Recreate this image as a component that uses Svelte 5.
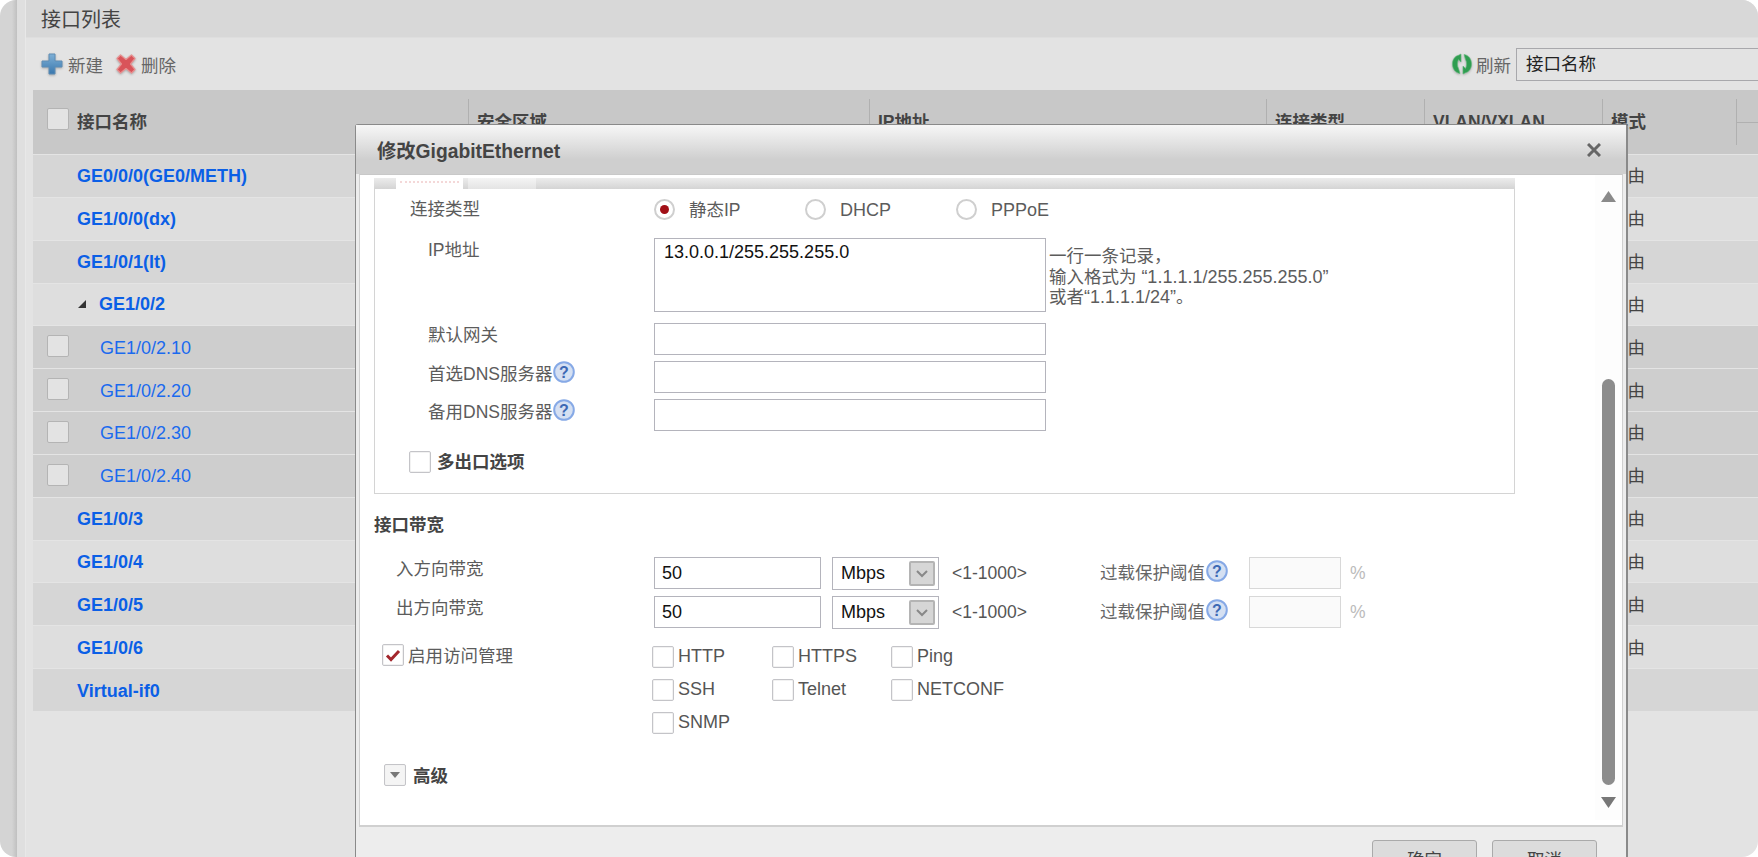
<script>
  const rows = [
    { name: "GE0/0/0(GE0/METH)", tone: "a", mode: "路由" },
    { name: "GE1/0/0(dx)", tone: "b", mode: "路由" },
    { name: "GE1/0/1(lt)", tone: "a", mode: "路由" },
    { name: "GE1/0/2", tone: "b", mode: "路由", open: true },
    { name: "GE1/0/2.10", tone: "c", mode: "路由", child: true },
    { name: "GE1/0/2.20", tone: "c", mode: "路由", child: true },
    { name: "GE1/0/2.30", tone: "c", mode: "路由", child: true },
    { name: "GE1/0/2.40", tone: "c", mode: "路由", child: true },
    { name: "GE1/0/3", tone: "a", mode: "路由" },
    { name: "GE1/0/4", tone: "b", mode: "路由" },
    { name: "GE1/0/5", tone: "a", mode: "路由" },
    { name: "GE1/0/6", tone: "b", mode: "路由" },
    { name: "Virtual-if0", tone: "a", mode: "" }
  ];
  const heads = [
    { label: "安全区域", w: 401 },
    { label: "IP地址", w: 397 },
    { label: "连接类型", w: 158 },
    { label: "VLAN/VXLAN", w: 178 },
    { label: "模式", w: 134 }
  ];
  const services = ["HTTP", "HTTPS", "Ping", "SSH", "Telnet", "NETCONF", "SNMP"];
  const bandwidth = ["入方向带宽", "出方向带宽"];
</script>

{#snippet hint()}
  <svg class="hint" width="22" height="22" viewBox="0 0 22 22">
    <circle cx="11" cy="11" r="9.800" fill="#d5e0f2" stroke="#86a9e6" stroke-width="2" />
    <text x="11" y="16.500" text-anchor="middle" class="hint-q">?</text>
  </svg>
{/snippet}

<div class="shell">
  <div class="rail"></div>
  <div class="rail-inner"></div>
  <div class="panel">
    <div class="panel-title">接口列表</div>
    <div class="toolbar">
      <svg class="soft" width="22" height="22" viewBox="0 0 22 22">
        <defs>
          <linearGradient id="plusfill" x1="0" y1="0" x2="0" y2="1">
            <stop offset="0" stop-color="#7fb0d6" />
            <stop offset="1" stop-color="#3a78ae" />
          </linearGradient>
        </defs>
        <path d="M8 1h6v7h7v6h-7v7h-6v-7h-7v-6h7z" fill="url(#plusfill)" stroke="#5f8db5" stroke-width="1" stroke-linejoin="round" />
      </svg>
      <span class="tool-label plus-label">新建</span>
      <svg class="soft del" width="20" height="20" viewBox="0 0 20 20">
        <path d="M4.500 1 10 5.500 15.500 1 19 4.500 14.500 10 19 15.500 15.500 19 10 14.500 4.500 19 1 15.500 5.500 10 1 4.500z" fill="#d9545a" stroke="#e78f8f" stroke-width="1.200" stroke-linejoin="round" />
      </svg>
      <span class="tool-label">删除</span>
      <span class="spacer"></span>
      <svg class="soft" width="20" height="22" viewBox="0 0 20 22">
        <path d="M9 1v8L6.500 6.500C5 9 5 13 6.500 15.500L8 20.500C3 19.800.5 15.500.5 11 .5 6.500 3 3 6.500 2.300z" fill="#2f9d50" stroke="#5fbb7a" stroke-width=".6" stroke-linejoin="round" />
        <path d="M11 21v-8l2.500 2.500c1.500-2.500 1.500-6.500 0-9L12 1.500c5 .7 7.500 5 7.500 9.500 0 4.500-2.500 8-6 8.700z" fill="#2f9d50" stroke="#5fbb7a" stroke-width=".6" stroke-linejoin="round" />
      </svg>
      <span class="tool-label refresh-label">刷新</span>
      <div class="searchbox">接口名称</div>
    </div>

    <div class="grid">
      <div class="head">
        <div class="head-name">
          <span class="cb on-grey"></span>
          <span>接口名称</span>
        </div>
        {#each heads as h}
          <div class="th" style="width:{h.w}px">{h.label}</div>
        {/each}
        <div class="th th-last"><i></i></div>
      </div>
      {#each rows as r}
        <div class="row {r.tone}">
          <div class="name">
            {#if r.child}
              <span class="cb on-grey"></span>
              <a class="child-link" href="#top">{r.name}</a>
            {:else if r.open}
              <svg class="tree" width="10" height="10" viewBox="0 0 10 10"><path d="M1 9 9 1v8z" fill="#333" /></svg>
              <a class="link open" href="#top">{r.name}</a>
            {:else}
              <a class="link top" href="#top">{r.name}</a>
            {/if}
          </div>
          <div class="mode">{r.mode}</div>
        </div>
      {/each}
    </div>
  </div>

  <div class="dialog">
    <div class="dlg-title">
      <span>修改GigabitEthernet</span>
      <svg width="14" height="14" viewBox="0 0 14 14">
        <path d="M1 1 13 13M13 1 1 13" stroke="#666" stroke-width="3" />
      </svg>
    </div>
    <div class="dlg-body">
      <div class="content">
        <div class="tabstrip">
          <span class="tab-a"></span>
          <span class="tab-on"><i></i></span>
          <span class="tab-b"></span>
        </div>
        <div class="box">
          <div class="f conn">
            <span class="lab l1">连接类型</span>
            <div class="radios">
              <span class="radio checked"></span><span class="rt w1">静态IP</span>
              <span class="radio"></span><span class="rt w2 en">DHCP</span>
              <span class="radio"></span><span class="rt en">PPPoE</span>
            </div>
          </div>
          <div class="f ip">
            <span class="lab l2 ip-lab">IP地址</span>
            <textarea class="area">13.0.0.1/255.255.255.0</textarea>
            <div class="note">一行一条记录，<br />输入格式为 <span class="en">“1.1.1.1/255.255.255.0”</span><br />或者<span class="en">“1.1.1.1/24”</span>。</div>
          </div>
          <div class="f gw">
            <span class="lab l2">默认网关</span>
            <input class="txt" />
          </div>
          <div class="f dns">
            <span class="lab l2">首选DNS服务器{@render hint()}</span>
            <input class="txt" />
          </div>
          <div class="f dns">
            <span class="lab l2">备用DNS服务器{@render hint()}</span>
            <input class="txt" />
          </div>
          <div class="multi">
            <span class="cb"></span>
            <strong>多出口选项</strong>
          </div>
        </div>

        <h4>接口带宽</h4>
        {#each bandwidth as b, i}
          <div class="bw" class:second={i === 1}>
            <span class="bw-lab">{b}</span>
            <input class="num" value="50" />
            <div class="select">
              <span>Mbps</span>
              <span class="drop">
                <svg width="14" height="9" viewBox="0 0 14 9"><path d="M2 2 7 7l5-5" fill="none" stroke="#888" stroke-width="2" /></svg>
              </span>
            </div>
            <span class="range">&lt;1-1000&gt;</span>
            <span class="over">过载保护阈值{@render hint()}</span>
            <input class="off" disabled />
            <span class="pct">%</span>
          </div>
        {/each}

        <div class="access">
          <div class="access-main">
            <span class="cb">
              <svg width="18" height="16" viewBox="0 0 18 16"><path d="M3 8.500 7 12.500 15 4" fill="none" stroke="#a3262c" stroke-width="3" /></svg>
            </span>
            <span>启用访问管理</span>
          </div>
          <div class="services">
            {#each services as s}
              <div class="svc"><span class="cb"></span><span>{s}</span></div>
            {/each}
          </div>
        </div>

        <div class="adv">
          <span class="cb adv-box">
            <svg width="12" height="8" viewBox="0 0 12 8"><path d="M1 1h10L6 7z" fill="#777" /></svg>
          </span>
          <strong>高级</strong>
        </div>
      </div>

      <div class="scroll">
        <svg class="up" width="15" height="11" viewBox="0 0 15 11"><path d="M7.500 0 15 11H0z" fill="#8a8a8a" /></svg>
        <div class="thumb"></div>
        <svg class="down" width="15" height="11" viewBox="0 0 15 11"><path d="M0 0h15L7.500 11z" fill="#777" /></svg>
      </div>
    </div>
    <div class="dlg-foot">
      <button>确定</button>
      <button>取消</button>
    </div>
  </div>
</div>

<style>
  :global(body) {
    margin: 0;
    background: #fff;
    overflow: hidden;
  }
  .shell {
    position: relative;
    display: flex;
    width: 1758px;
    height: 857px;
    overflow: hidden;
    border-radius: 16px;
    font: 17.5px "Liberation Sans", "Noto Sans CJK SC", sans-serif;
    color: #555;
  }
  .en { font-size: 18px; }
  .rail {
    width: 17px;
    background: linear-gradient(to right, #d4d4d4 70%, #c0c0c0);
  }
  .rail-inner {
    width: 9px;
    background: #dfdfdf;
    border-right: 1px solid #e8e8e8;
    box-sizing: border-box;
  }
  .panel {
    flex: 1;
    min-width: 0;
    background: #e3e3e3;
  }
  .panel-title {
    height: 38px;
    box-sizing: border-box;
    padding: 3px 0 0 15px;
    line-height: 34px;
    font-size: 20px;
    color: #444;
    background: #d8d8d8;
    border-bottom: 1px solid #dedede;
  }
  .toolbar {
    display: flex;
    align-items: center;
    height: 52px;
    padding-left: 15px;
    color: #666;
  }
  .soft { filter: drop-shadow(0 1px 1px rgba(0, 0, 0, 0.25)); flex: none; }
  .tool-label { margin-left: 5px; }
  .plus-label { margin-right: 13px; }
  .spacer { flex: 1; }
  .refresh-label { margin-left: 4px; margin-right: 5px; }
  .searchbox {
    width: 232px;
    height: 31px;
    line-height: 31px;
    padding-left: 9px;
    border: 1px solid #a8a8ac;
    border-right: none;
    color: #222;
  }
  .grid { margin-left: 7px; }
  .head {
    display: flex;
    height: 64px;
    background: #c8c8c8;
    color: #444;
    font-weight: bold;
  }
  .head-name {
    display: flex;
    align-items: center;
    gap: 8px;
    width: 435px;
    box-sizing: border-box;
    padding: 0 0 4px 14px;
  }
  .head-name .cb { margin-bottom: 3px; }
  .th {
    box-sizing: border-box;
    height: 46px;
    margin-top: 9px;
    padding-left: 8px;
    line-height: 46px;
    border-left: 1px solid #b0b0b0;
  }
  .th-last {
    flex: 1;
    padding: 0;
    display: flex;
    align-items: center;
  }
  .th-last i {
    flex: 1;
    border-top: 1px solid #b0b0b0;
  }
  .row {
    display: flex;
    align-items: center;
    height: 42.85px;
    box-sizing: border-box;
    border-top: 1px solid #e4e4e4;
  }
  .row.a { background: #d6d6d6; }
  .row.b { background: #dedede; }
  .row.c { background: #cecece; }
  .name {
    display: flex;
    align-items: center;
    width: 1569px;
    padding-left: 14px;
    box-sizing: border-box;
  }
  .mode {
    padding: 0 0 2px 8px;
    color: #444;
  }
  .link {
    position: relative;
    top: 1px;
    color: #0b5fe6;
    font-size: 18px;
    font-weight: bold;
    text-decoration: none;
  }
  .link.top { margin-left: 30px; }
  .link.open { top: 0; }
  .child-link {
    margin-left: 31px;
    color: #1a6aee;
    font-size: 18px;
    text-decoration: none;
    position: relative;
    top: 1px;
  }
  .tree { margin: 0 12px 0 30px; }
  .cb {
    display: inline-flex;
    flex: none;
    align-items: center;
    justify-content: center;
    width: 20px;
    height: 20px;
    background: #fff;
    border: 1px solid #c4c4c8;
    border-radius: 2px;
    box-shadow: inset 0 0 0 1px #f2f2f2;
  }
  .cb.on-grey {
    background: #e3e3e3;
    border-color: #b4b4b4;
    box-shadow: none;
  }
  .row .cb { position: relative; top: -1px; }

  .dialog {
    position: absolute;
    left: 355px;
    top: 124px;
    width: 1273px;
    height: 770px;
    box-sizing: border-box;
    background: #ededed;
    border: 1px solid #8a8a8a;
    border-right-width: 2px;
    border-radius: 3px 3px 0 0;
    padding: 0 3px;
  }
  .dlg-title {
    display: flex;
    align-items: center;
    justify-content: space-between;
    height: 49px;
    margin: 0 -3px;
    padding: 0 25px 0 21px;
    background: linear-gradient(#f7f7f7, #cfcfcf 70%);
    color: #444;
    font-size: 19.300px;
    font-weight: bold;
  }
  .dlg-body {
    display: flex;
    height: 653px;
    background: #fff;
    border-left: 1px solid #d0d0d0;
    border-right: 1px solid #d0d0d0;
    border-bottom: 2px solid #d0d0d0;
    border-top: 1px solid #c8c8c8;
    box-sizing: border-box;
    overflow: hidden;
  }
  .content {
    width: 1235px;
    flex: none;
    padding-left: 14px;
    box-sizing: border-box;
  }
  .tabstrip {
    display: flex;
    width: 1141px;
    height: 11px;
    margin-top: 3px;
    background: linear-gradient(#ececec, #d4d4d4);
  }
  .tab-a { width: 22px; }
  .tab-on {
    width: 67px;
    padding: 3px 4px 0;
    box-sizing: border-box;
    background: #fff;
  }
  .tab-on i {
    display: block;
    border-top: 2px dotted #f4d8d8;
  }
  .tab-b {
    width: 68px;
    margin-left: 5px;
    background: linear-gradient(#f4f4f4, #e4e4e4);
  }
  .box {
    width: 1141px;
    height: 305px;
    box-sizing: border-box;
    border: 1px solid #d4d4d4;
    border-top: none;
    padding-top: 10px;
  }
  .f {
    display: flex;
    align-items: flex-start;
  }
  .lab {
    display: flex;
    align-items: center;
    flex: none;
    width: 279px;
    box-sizing: border-box;
    color: #5c5c5c;
  }
  .l1 { padding-left: 35px; }
  .l2 { padding-left: 53px; }
  .conn { height: 20px; line-height: 20px; }
  .radios {
    display: flex;
    align-items: center;
  }
  .radio {
    flex: none;
    display: inline-flex;
    align-items: center;
    justify-content: center;
    box-sizing: border-box;
    width: 21px;
    height: 21px;
    border: 2px solid #cfcfcf;
    border-radius: 50%;
    background: #fff;
  }
  .radio.checked::after {
    content: "";
    width: 9px;
    height: 9px;
    border-radius: 50%;
    background: #a10f16;
  }
  .rt { margin-left: 14px; color: #5c5c5c; }
  .w1 { width: 116px; }
  .w2 { width: 116px; }
  .ip { margin-top: 19px; height: 74px; }
  .ip-lab { line-height: 24px; }
  .area {
    flex: none;
    width: 392px;
    height: 74px;
    box-sizing: border-box;
    margin: 0;
    padding: 3px 9px;
    border: 1px solid #b4b4bc;
    border-radius: 0;
    outline: none;
    resize: none;
    color: #111;
    font: 18px "Liberation Sans", sans-serif;
  }
  .note {
    margin: 8px 0 0 3px;
    line-height: 20.500px;
    color: #5c5c5c;
  }
  .gw { margin-top: 11px; }
  .dns { margin-top: 6px; }
  .gw .lab { height: 20px; }
  .dns .lab { height: 22px; }
  .txt {
    width: 392px;
    height: 32px;
    box-sizing: border-box;
    margin: 0;
    border: 1px solid #b4b4bc;
    border-radius: 0;
    outline: none;
  }
  .hint { flex: none; margin-left: 1px; }
  .hint-q {
    fill: #3d69b4;
    font: bold 16px "Liberation Sans", sans-serif;
  }
  .multi {
    display: flex;
    align-items: center;
    gap: 6px;
    margin: 18px 0 0 34px;
    color: #444;
  }
  .multi strong { position: relative; top: -1px; }
  h4 {
    margin: 21px 0 0;
    height: 20px;
    line-height: 20px;
    font-size: inherit;
    color: #444;
  }
  .bw {
    display: flex;
    align-items: flex-start;
    height: 33px;
    margin-top: 22px;
  }
  .bw.second { margin-top: 6px; }
  .bw-lab {
    width: 280px;
    box-sizing: border-box;
    padding-left: 22px;
    line-height: 25px;
    color: #5c5c5c;
  }
  .num {
    width: 167px;
    height: 32px;
    box-sizing: border-box;
    margin: 0;
    padding: 0 7px;
    border: 1px solid #b4b4bc;
    border-radius: 0;
    outline: none;
    font: 18px "Liberation Sans", sans-serif;
    color: #111;
  }
  .select {
    display: flex;
    align-items: center;
    justify-content: space-between;
    box-sizing: border-box;
    width: 107px;
    height: 33px;
    margin-left: 11px;
    padding: 0 3px 0 8px;
    border: 1px solid #b4b4bc;
    font-size: 18px;
    color: #111;
  }
  .drop {
    display: flex;
    align-items: center;
    justify-content: center;
    box-sizing: border-box;
    width: 26px;
    height: 25px;
    background: #d6d6d6;
    border: 2px solid #b4b4b4;
    border-radius: 2px;
  }
  .range {
    width: 148px;
    margin-left: 13px;
    line-height: 33px;
    color: #555;
  }
  .over {
    display: flex;
    align-items: center;
    width: 149px;
    height: 28px;
    color: #666;
  }
  .off {
    width: 92px;
    height: 32px;
    box-sizing: border-box;
    margin: 0;
    background: #fafafa;
    border: 1px solid #d8d8d8;
    border-radius: 0;
  }
  .pct {
    margin-left: 9px;
    line-height: 32px;
    color: #bbb;
  }
  .access {
    display: flex;
    align-items: flex-start;
    margin-top: 17px;
  }
  .access-main {
    display: flex;
    align-items: center;
    gap: 4px;
    width: 278px;
    box-sizing: border-box;
    margin-top: -4px;
    padding-left: 8px;
    color: #5c5c5c;
  }
  .services {
    display: grid;
    grid-template-columns: 120px 119px auto;
    row-gap: 12px;
  }
  .svc {
    display: flex;
    align-items: center;
    gap: 4px;
    height: 21px;
    font-size: 18px;
    color: #555;
  }
  .adv {
    display: flex;
    align-items: center;
    gap: 7px;
    margin: 29px 0 0 10px;
    color: #444;
  }
  .adv-box { background: #f4f4f4; }
  .scroll {
    display: flex;
    flex: 1;
    flex-direction: column;
    align-items: center;
    height: 645px;
    background: #fdfdfd;
  }
  .up { margin-top: 16px; }
  .thumb {
    width: 13px;
    height: 406px;
    margin-top: 177px;
    background: #8c8c8c;
    border-radius: 7px;
  }
  .down { margin-top: 12px; }
  .dlg-foot {
    display: flex;
    justify-content: flex-end;
    gap: 15px;
    padding: 13px 26px 0 0;
  }
  button {
    width: 105px;
    height: 36px;
    padding: 0;
    background: #dcdcdc;
    border: 1px solid #aaa;
    border-radius: 3px;
    font: inherit;
    color: #444;
  }
</style>
